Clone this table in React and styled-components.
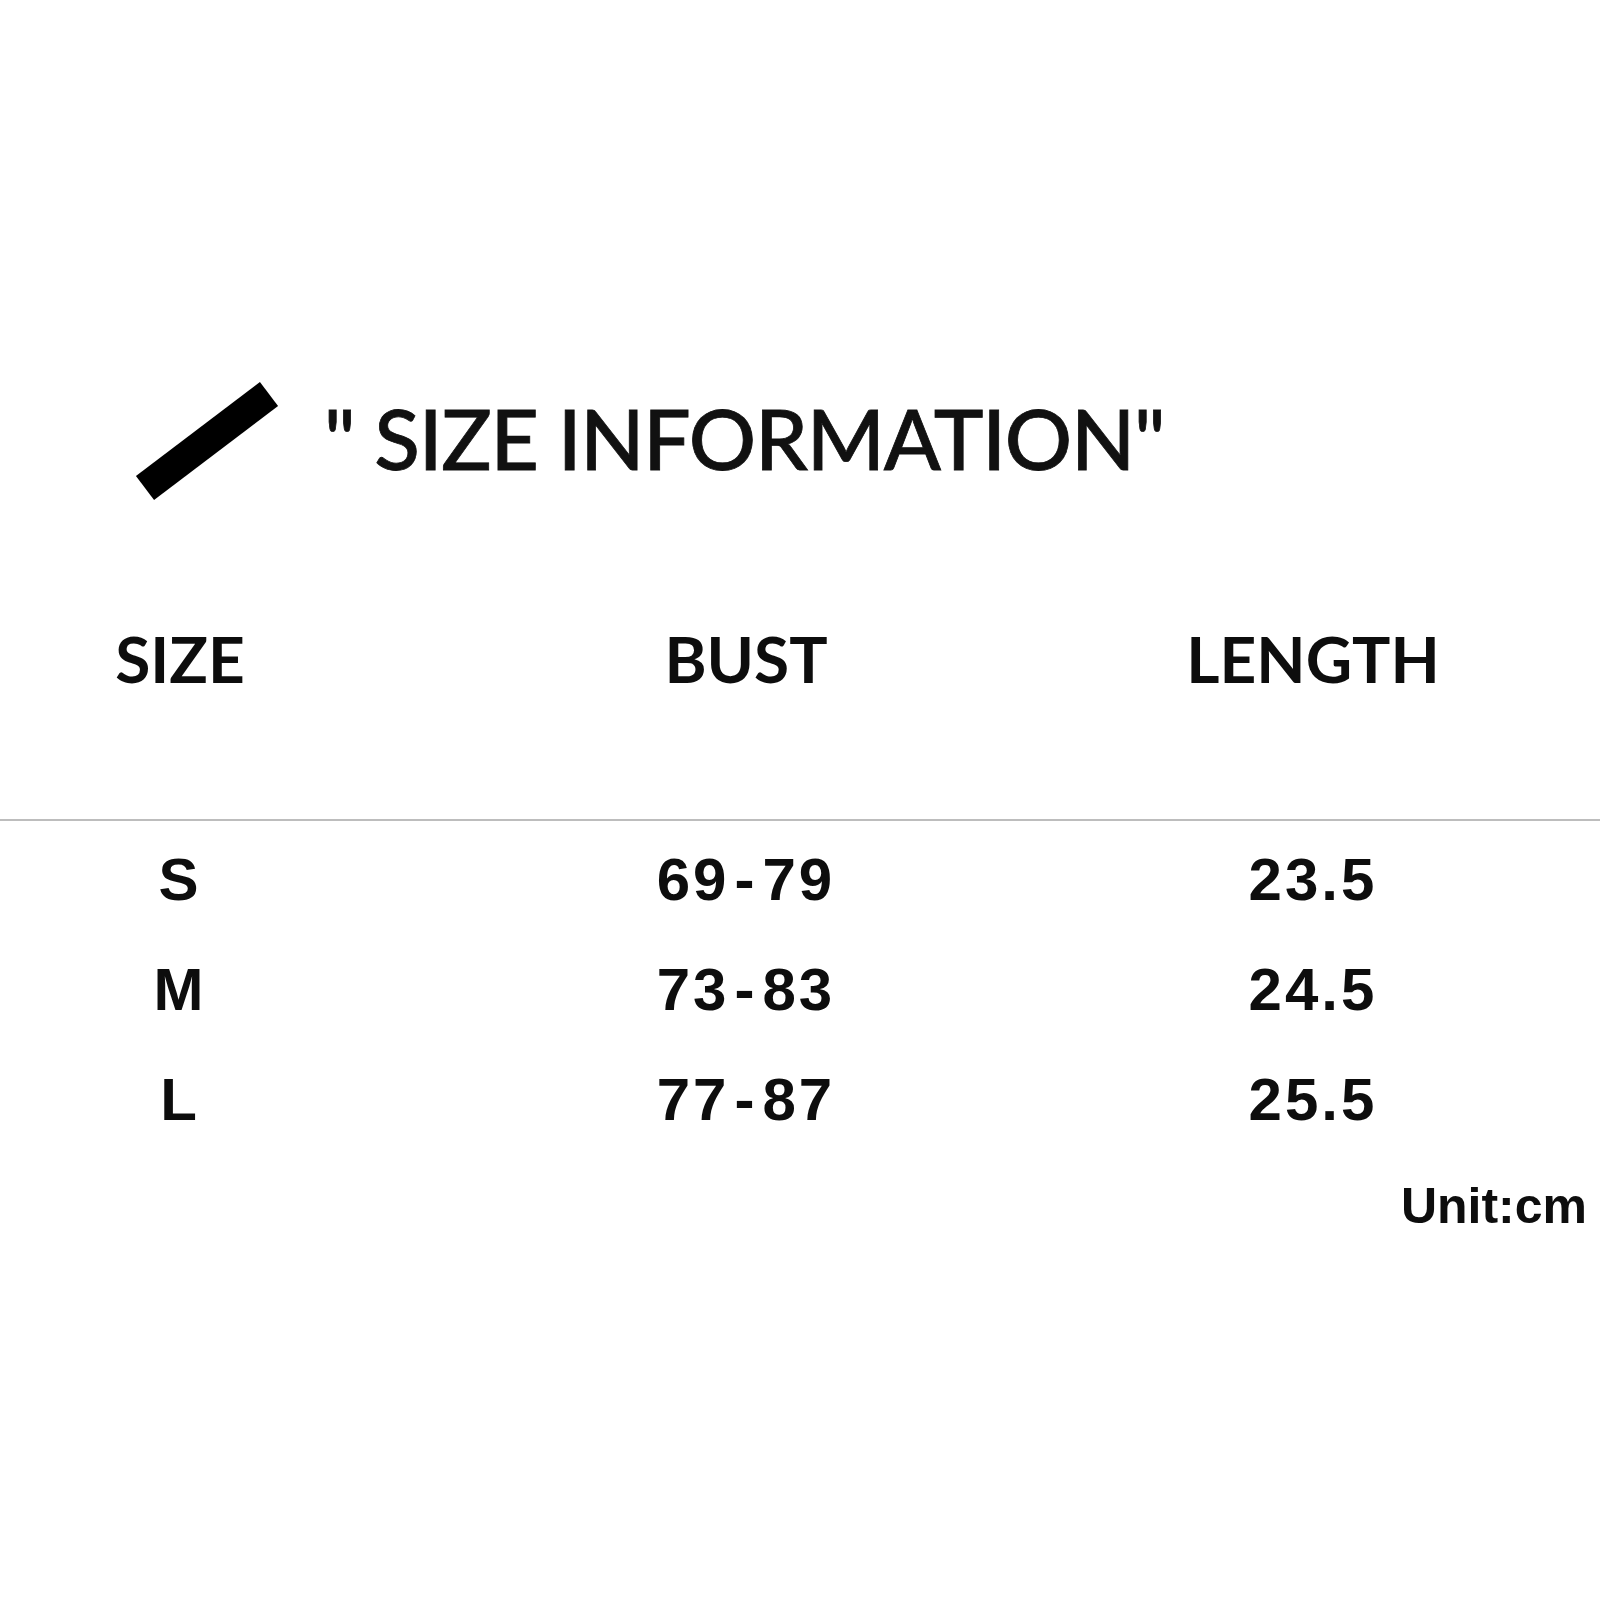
import styled, { createGlobalStyle } from "styled-components";

const GlobalStyle = createGlobalStyle`
  html, body {
    margin: 0;
    padding: 0;
    background: #fff;
  }
`;

const rows = [
  { size: "S", bust: ["69", "79"], length: "23.5" },
  { size: "M", bust: ["73", "83"], length: "24.5" },
  { size: "L", bust: ["77", "87"], length: "25.5" },
];

const Slash = () => (
  <svg width="155" height="135" viewBox="0 0 155 135">
    <line x1="139" y1="24" x2="15" y2="118" stroke="#000" strokeWidth="30" />
  </svg>
);

const App = () => {
  return (
    <Page>
      <GlobalStyle />
      <Heading>
        <Slash />
        <Title>" SIZE INFORMATION"</Title>
      </Heading>
      <Grid $gap={99}>
        <Label>SIZE</Label>
        <Label>BUST</Label>
        <Label>LENGTH</Label>
      </Grid>
      <Rule />
      <Grid $gap={4}>
        {rows.map((row) => (
          <Row key={row.size}>
            <Cell>{row.size}</Cell>
            <Cell>
              {row.bust[0]}
              <Dash>-</Dash>
              {row.bust[1]}
            </Cell>
            <Cell>{row.length}</Cell>
          </Row>
        ))}
      </Grid>
      <Unit>Unit:cm</Unit>
    </Page>
  );
};

export default App;

const Page = styled.main`
  width: 1600px;
  height: 1600px;
  padding-top: 370px;
  box-sizing: border-box;
  background: #fff;
  color: #0d0d0d;
`;

const Heading = styled.header`
  display: flex;
  align-items: center;
  gap: 39px;
  padding-left: 130px;
`;

const Title = styled.h1`
  margin: 0;
  font-family: Lato, "Open Sans", sans-serif;
  font-weight: 500;
  font-size: 84px;
  line-height: 110px;
  letter-spacing: -1.3px;
  white-space: pre;
  color: #111;
  -webkit-text-stroke: 0.8px #111;
`;

const Grid = styled.section`
  display: grid;
  grid-template-columns: 360px 772px 362px;
  justify-items: center;
  margin-top: ${({ $gap }) => $gap}px;
`;

const Label = styled.div`
  font-family: Lato, "Open Sans", sans-serif;
  font-weight: 700;
  font-size: 64px;
  line-height: 110px;
`;

const Rule = styled.hr`
  margin: 105px 0 0;
  border: 0;
  height: 2px;
  background: #bdbdbd;
`;

const Row = styled.div`
  display: contents;
`;

const Cell = styled.div`
  font-family: "Liberation Sans", Arial, sans-serif;
  font-weight: 700;
  font-size: 60px;
  line-height: 110px;
  letter-spacing: 3px;
`;

const Dash = styled.span`
  margin: 0 5px;
`;

const Unit = styled.div`
  margin-top: 21px;
  padding-right: 13px;
  text-align: right;
  font-family: "Liberation Sans", Arial, sans-serif;
  font-weight: 700;
  font-size: 50px;
  line-height: 60px;
`;
